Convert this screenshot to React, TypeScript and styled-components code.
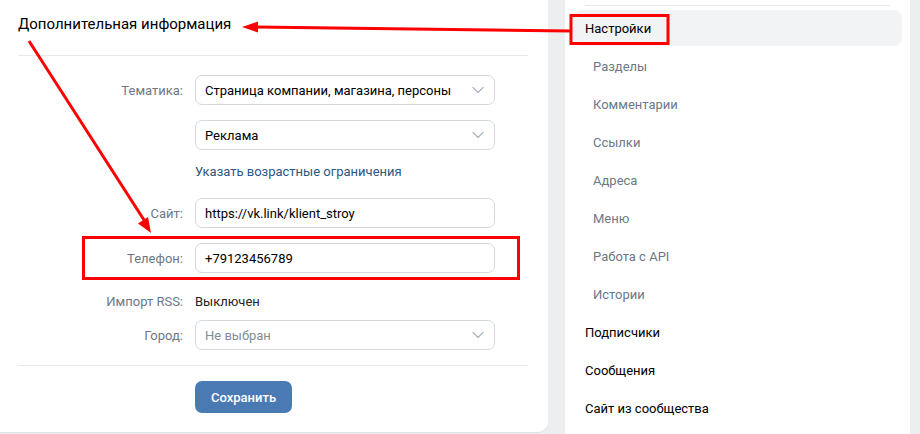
import React from "react";
import styled, { createGlobalStyle } from "styled-components";

const GlobalStyle = createGlobalStyle`
  html, body {
    margin: 0;
    padding: 0;
    background: #edeef0;
    font-family: Roboto, "Liberation Sans", Arial, sans-serif;
    -webkit-font-smoothing: antialiased;
  }
`;

const Page = styled.div`
  position: relative;
  display: flex;
  align-items: flex-start;
  width: 920px;
  height: 434px;
  overflow: hidden;
`;

const MainCard = styled.section`
  width: 548px;
  height: 432px;
  background: #fff;
  border-radius: 0 0 10px 0;
  box-shadow: 0 1px 0 0 #dce1e6;
  box-sizing: border-box;
  padding: 0 20px 0 18px;
`;

const Heading = styled.h2`
  margin: 0;
  padding-top: 15px;
  height: 55px;
  box-sizing: border-box;
  font-size: 15px;
  line-height: 18px;
  font-weight: 400;
  color: #000;
`;

const Divider = styled.div<{ $top?: number }>`
  height: 1px;
  background: #e7e8ec;
  margin-top: ${(p) => p.$top ?? 0}px;
`;

const Form = styled.div`
  display: flex;
  flex-direction: column;
  padding-top: 19px;
`;

const Row = styled.div<{ $gap?: number }>`
  display: flex;
  align-items: center;
  gap: 12px;
  margin-top: ${(p) => p.$gap ?? 0}px;
  min-height: 20px;
`;

const Label = styled.div`
  width: 165px;
  text-align: right;
  font-size: 13px;
  color: #6d7885;
`;

const Field = styled.div<{ $muted?: boolean }>`
  width: 300px;
  height: 30px;
  box-sizing: border-box;
  border: 1px solid #d3d9de;
  border-radius: 7px;
  display: flex;
  align-items: center;
  justify-content: space-between;
  padding: 0 10px 0 9px;
  font-size: 13px;
  color: ${(p) => (p.$muted ? "#818c99" : "#000")};
`;

const Value = styled.div`
  font-size: 13px;
  color: #222;
`;

const TextLink = styled.a`
  font-size: 13px;
  color: #2a5885;
  text-decoration: none;
  line-height: 20px;
`;

const Actions = styled.div`
  display: flex;
  padding: 15px 0 0 177px;
`;

const Button = styled.button`
  height: 32px;
  padding: 0 16px;
  border: none;
  border-radius: 7px;
  background: #4a7ab4;
  color: #fff;
  font-family: inherit;
  font-size: 13px;
  font-weight: 500;
`;

const SideCard = styled.nav`
  margin-left: 17px;
  width: 345px;
  height: 434px;
  background: #fff;
  box-sizing: border-box;
  padding: 5px 8px 0;
`;

const SideDivider = styled.div`
  height: 1px;
  background: #e7e8ec;
  margin: 0 12px 4px;
`;

const MenuItem = styled.div<{ $sub?: boolean; $active?: boolean }>`
  height: 36px;
  margin-bottom: 2px;
  display: flex;
  align-items: center;
  padding-left: ${(p) => (p.$sub ? 20 : 12)}px;
  border-radius: 8px;
  font-size: 13px;
  background: ${(p) => (p.$active ? "#f2f3f5" : "transparent")};
  color: ${(p) => (p.$sub ? "#6d7885" : "#000")};
`;

const Overlay = styled.svg`
  position: absolute;
  left: 0;
  top: 0;
  pointer-events: none;
`;

const Chevron = () => (
  <svg width="12" height="8" viewBox="0 0 12 8">
    <path d="M1 1.5l5 5 5-5" fill="none" stroke="#aeb7c2" strokeWidth="1.3" strokeLinecap="round" strokeLinejoin="round" />
  </svg>
);

const Select: React.FC<{ value: string; muted?: boolean }> = ({ value, muted }) => (
  <Field $muted={muted}>
    <span>{value}</span>
    <Chevron />
  </Field>
);

const subItems = ["Разделы", "Комментарии", "Ссылки", "Адреса", "Меню", "Работа с API", "Истории"];
const mainItems = ["Подписчики", "Сообщения", "Сайт из сообщества"];

export default function App() {
  return (
    <>
      <GlobalStyle />
      <Page>
        <MainCard>
          <Heading>Дополнительная информация</Heading>
          <Divider />
          <Form>
            <Row>
              <Label>Тематика:</Label>
              <Select value="Страница компании, магазина, персоны" />
            </Row>
            <Row $gap={15}>
              <Label />
              <Select value="Реклама" />
            </Row>
            <Row $gap={12}>
              <Label />
              <TextLink href="#">Указать возрастные ограничения</TextLink>
            </Row>
            <Row $gap={16}>
              <Label>Сайт:</Label>
              <Field>https://vk.link/klient_stroy</Field>
            </Row>
            <Row $gap={15}>
              <Label>Телефон:</Label>
              <Field>+79123456789</Field>
            </Row>
            <Row $gap={18}>
              <Label>Импорт RSS:</Label>
              <Value>Выключен</Value>
            </Row>
            <Row $gap={9}>
              <Label>Город:</Label>
              <Select value="Не выбран" muted />
            </Row>
          </Form>
          <Divider $top={15} />
          <Actions>
            <Button>Сохранить</Button>
          </Actions>
        </MainCard>
        <SideCard>
          <SideDivider />
          <MenuItem $active>Настройки</MenuItem>
          {subItems.map((s) => (
            <MenuItem key={s} $sub>
              {s}
            </MenuItem>
          ))}
          {mainItems.map((s) => (
            <MenuItem key={s}>{s}</MenuItem>
          ))}
        </SideCard>
        <Overlay width="920" height="434" viewBox="0 0 920 434">
          <g fill="none" stroke="#ff0000" strokeWidth="3">
            <rect x="571" y="15.5" width="97" height="28" />
            <rect x="83.5" y="237.5" width="435" height="41" />
            <line x1="571" y1="31" x2="256" y2="27" />
            <line x1="29" y1="41" x2="144" y2="220" />
          </g>
          <g fill="#ff0000">
            <polygon points="242,27 258,21.5 258,32.5" />
            <polygon points="151,233 138,223.5 148,217" />
          </g>
        </Overlay>
      </Page>
    </>
  );
}
